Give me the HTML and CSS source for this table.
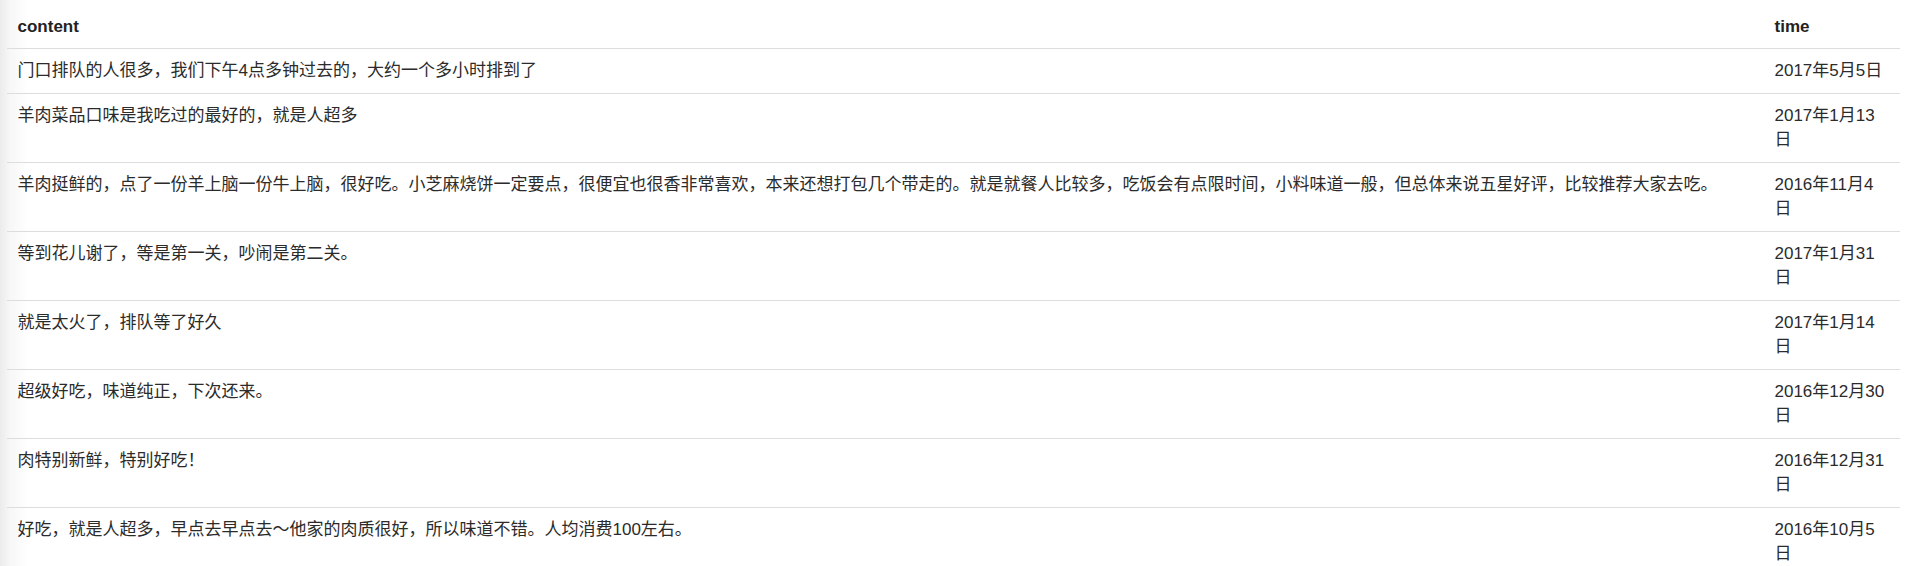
FILE: index.html
```html
<!DOCTYPE html>
<html lang="zh-CN">
<head>
<meta charset="utf-8">
<title>reviews</title>
<link rel="stylesheet" href="styles.css">
</head>
<body>
<div class="page">
  <table class="data">
    <colgroup>
      <col class="col-content">
      <col class="col-time">
    </colgroup>
    <thead>
      <tr><th>content</th><th>time</th></tr>
    </thead>
    <tbody>
      <tr><td>门口排队的人很多，我们下午4点多钟过去的，大约一个多小时排到了</td><td>2017年5月5日</td></tr>
      <tr><td>羊肉菜品口味是我吃过的最好的，就是人超多</td><td>2017年1月13日</td></tr>
      <tr><td>羊肉挺鲜的，点了一份羊上脑一份牛上脑，很好吃。小芝麻烧饼一定要点，很便宜也很香非常喜欢，本来还想打包几个带走的。就是就餐人比较多，吃饭会有点限时间，小料味道一般，但总体来说五星好评，比较推荐大家去吃。</td><td>2016年11月4日</td></tr>
      <tr><td>等到花儿谢了，等是第一关，吵闹是第二关。</td><td>2017年1月31日</td></tr>
      <tr><td>就是太火了，排队等了好久</td><td>2017年1月14日</td></tr>
      <tr><td>超级好吃，味道纯正，下次还来。</td><td>2016年12月30日</td></tr>
      <tr><td>肉特别新鲜，特别好吃！</td><td>2016年12月31日</td></tr>
      <tr><td>好吃，就是人超多，早点去早点去～他家的肉质很好，所以味道不错。人均消费100左右。</td><td>2016年10月5日</td></tr>
    </tbody>
  </table>
</div>
</body>
</html>
```

FILE: styles.css
```css
html, body {
  margin: 0;
  padding: 0;
  background: #fff;
}

body {
  background: linear-gradient(to right, #ebebeb 0, #f7f7f7 10px, #fff 28px);
  min-height: 566px;
}

.page {
  padding-left: 7px;
}

.data {
  width: 1893px;
  table-layout: fixed;
  border-collapse: collapse;
  font-family: "Liberation Sans", "Noto Sans CJK SC", sans-serif;
  font-size: 17px;
  line-height: 24px;
  color: #2b2b2b;
}

.col-time {
  width: 136px;
}

.data th {
  text-align: left;
  font-weight: bold;
  color: #222;
  padding: 15px 10.5px 9px 10.5px;
  border-bottom: 1px solid #ddd;
}

.data td {
  text-align: left;
  vertical-align: top;
  padding: 10px 10.5px 10px 10.5px;
  border-bottom: 1px solid #ddd;
}

.data tbody tr:last-child td {
  border-bottom: none;
}
```
